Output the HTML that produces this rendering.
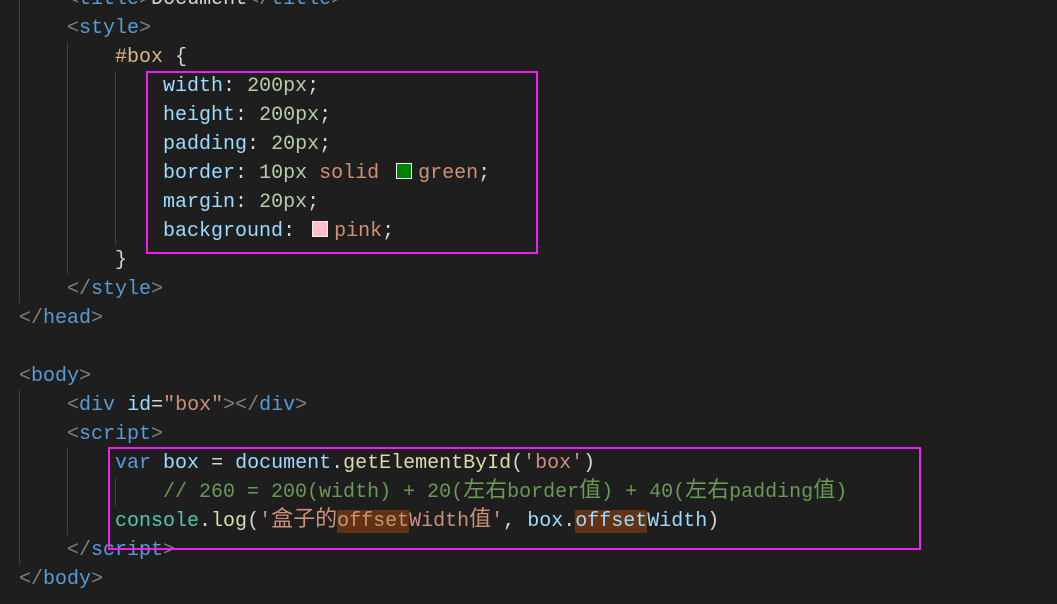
<!DOCTYPE html>
<html><head><meta charset="utf-8"><style>
body{margin:0;background:#1e1e1e;width:1057px;height:604px;overflow:hidden;position:relative;font-family:"Liberation Mono","Noto Sans CJK SC",monospace;font-size:20px;color:#d4d4d4}
.l{position:absolute;left:19px;height:29px;line-height:29px;white-space:pre;margin-top:2px}
.t{color:#569cd6}.p{color:#808080}.a{color:#9cdcfe}.n{color:#b5cea8}.s{color:#ce9178}.sel{color:#d7ba7d}.c{color:#6a9955}.f{color:#dcdcaa}.k{color:#4ec9b0}
.sw{display:inline-block;width:14px;height:14px;border:1px solid #eee;margin:0 6px;vertical-align:-1px}
.g{position:absolute;width:1px;background:#404040}
.bx{position:absolute;border:2px solid #f01ef0}
.hl{background:#613214}
.cj{font-family:"Noto Sans CJK SC",sans-serif;font-size:22px;line-height:20px}
</style></head><body>
<div class="g" style="left:19px;top:0;height:303px"></div>
<div class="g" style="left:67px;top:42px;height:233px"></div>
<div class="g" style="left:115px;top:71px;height:174px"></div>
<div class="g" style="left:19px;top:390px;height:175px"></div>
<div class="g" style="left:67px;top:448px;height:87px"></div>
<div class="g" style="left:115px;top:477px;height:29px"></div>
<div class="l" style="top:-17px">    <span class="p">&lt;</span><span class="t">title</span><span class="p">&gt;</span>Document<span class="p">&lt;/</span><span class="t">title</span><span class="p">&gt;</span></div>
<div class="l" style="top:12px">    <span class="p">&lt;</span><span class="t">style</span><span class="p">&gt;</span></div>
<div class="l" style="top:41px">        <span class="sel">#box</span> {</div>
<div class="l" style="top:70px">            <span class="a">width</span>: <span class="n">200px</span>;</div>
<div class="l" style="top:99px">            <span class="a">height</span>: <span class="n">200px</span>;</div>
<div class="l" style="top:128px">            <span class="a">padding</span>: <span class="n">20px</span>;</div>
<div class="l" style="top:157px">            <span class="a">border</span>: <span class="n">10px</span> <span class="s">solid</span> <span class="sw" style="background:#008000;margin-left:5px"></span><span class="s">green</span>;</div>
<div class="l" style="top:186px">            <span class="a">margin</span>: <span class="n">20px</span>;</div>
<div class="l" style="top:215px">            <span class="a">background</span>: <span class="sw" style="background:#ffc0cb;margin-left:5px"></span><span class="s">pink</span>;</div>
<div class="l" style="top:244px">        }</div>
<div class="l" style="top:273px">    <span class="p">&lt;/</span><span class="t">style</span><span class="p">&gt;</span></div>
<div class="l" style="top:302px"><span class="p">&lt;/</span><span class="t">head</span><span class="p">&gt;</span></div>
<div class="l" style="top:360px"><span class="p">&lt;</span><span class="t">body</span><span class="p">&gt;</span></div>
<div class="l" style="top:389px">    <span class="p">&lt;</span><span class="t">div</span> <span class="a">id</span>=<span class="s">"box"</span><span class="p">&gt;&lt;/</span><span class="t">div</span><span class="p">&gt;</span></div>
<div class="l" style="top:418px">    <span class="p">&lt;</span><span class="t">script</span><span class="p">&gt;</span></div>
<div class="l" style="top:447px">        <span class="t">var</span> <span class="a">box</span> = <span class="a">document</span>.<span class="f">getElementById</span>(<span class="s">'box'</span>)</div>
<div class="l" style="top:476px">            <span class="c">// 260 = 200(width) + 20(<span class="cj">左右</span>border<span class="cj">值</span>) + 40(<span class="cj">左右</span>padding<span class="cj">值</span>)</span></div>
<div class="l" style="top:505px">        <span class="k">console</span>.<span class="f">log</span>(<span class="s">'<span class="cj">盒子的</span><span class="hl">offset</span>Width<span class="cj">值</span>'</span>, <span class="a">box</span>.<span class="a"><span class="hl">offset</span>Width</span>)</div>
<div class="l" style="top:534px">    <span class="p">&lt;/</span><span class="t">script</span><span class="p">&gt;</span></div>
<div class="l" style="top:563px"><span class="p">&lt;/</span><span class="t">body</span><span class="p">&gt;</span></div>
<div class="bx" style="left:146px;top:71px;width:388px;height:179px"></div>
<div class="bx" style="left:108px;top:447px;width:809px;height:99px"></div>
</body></html>
